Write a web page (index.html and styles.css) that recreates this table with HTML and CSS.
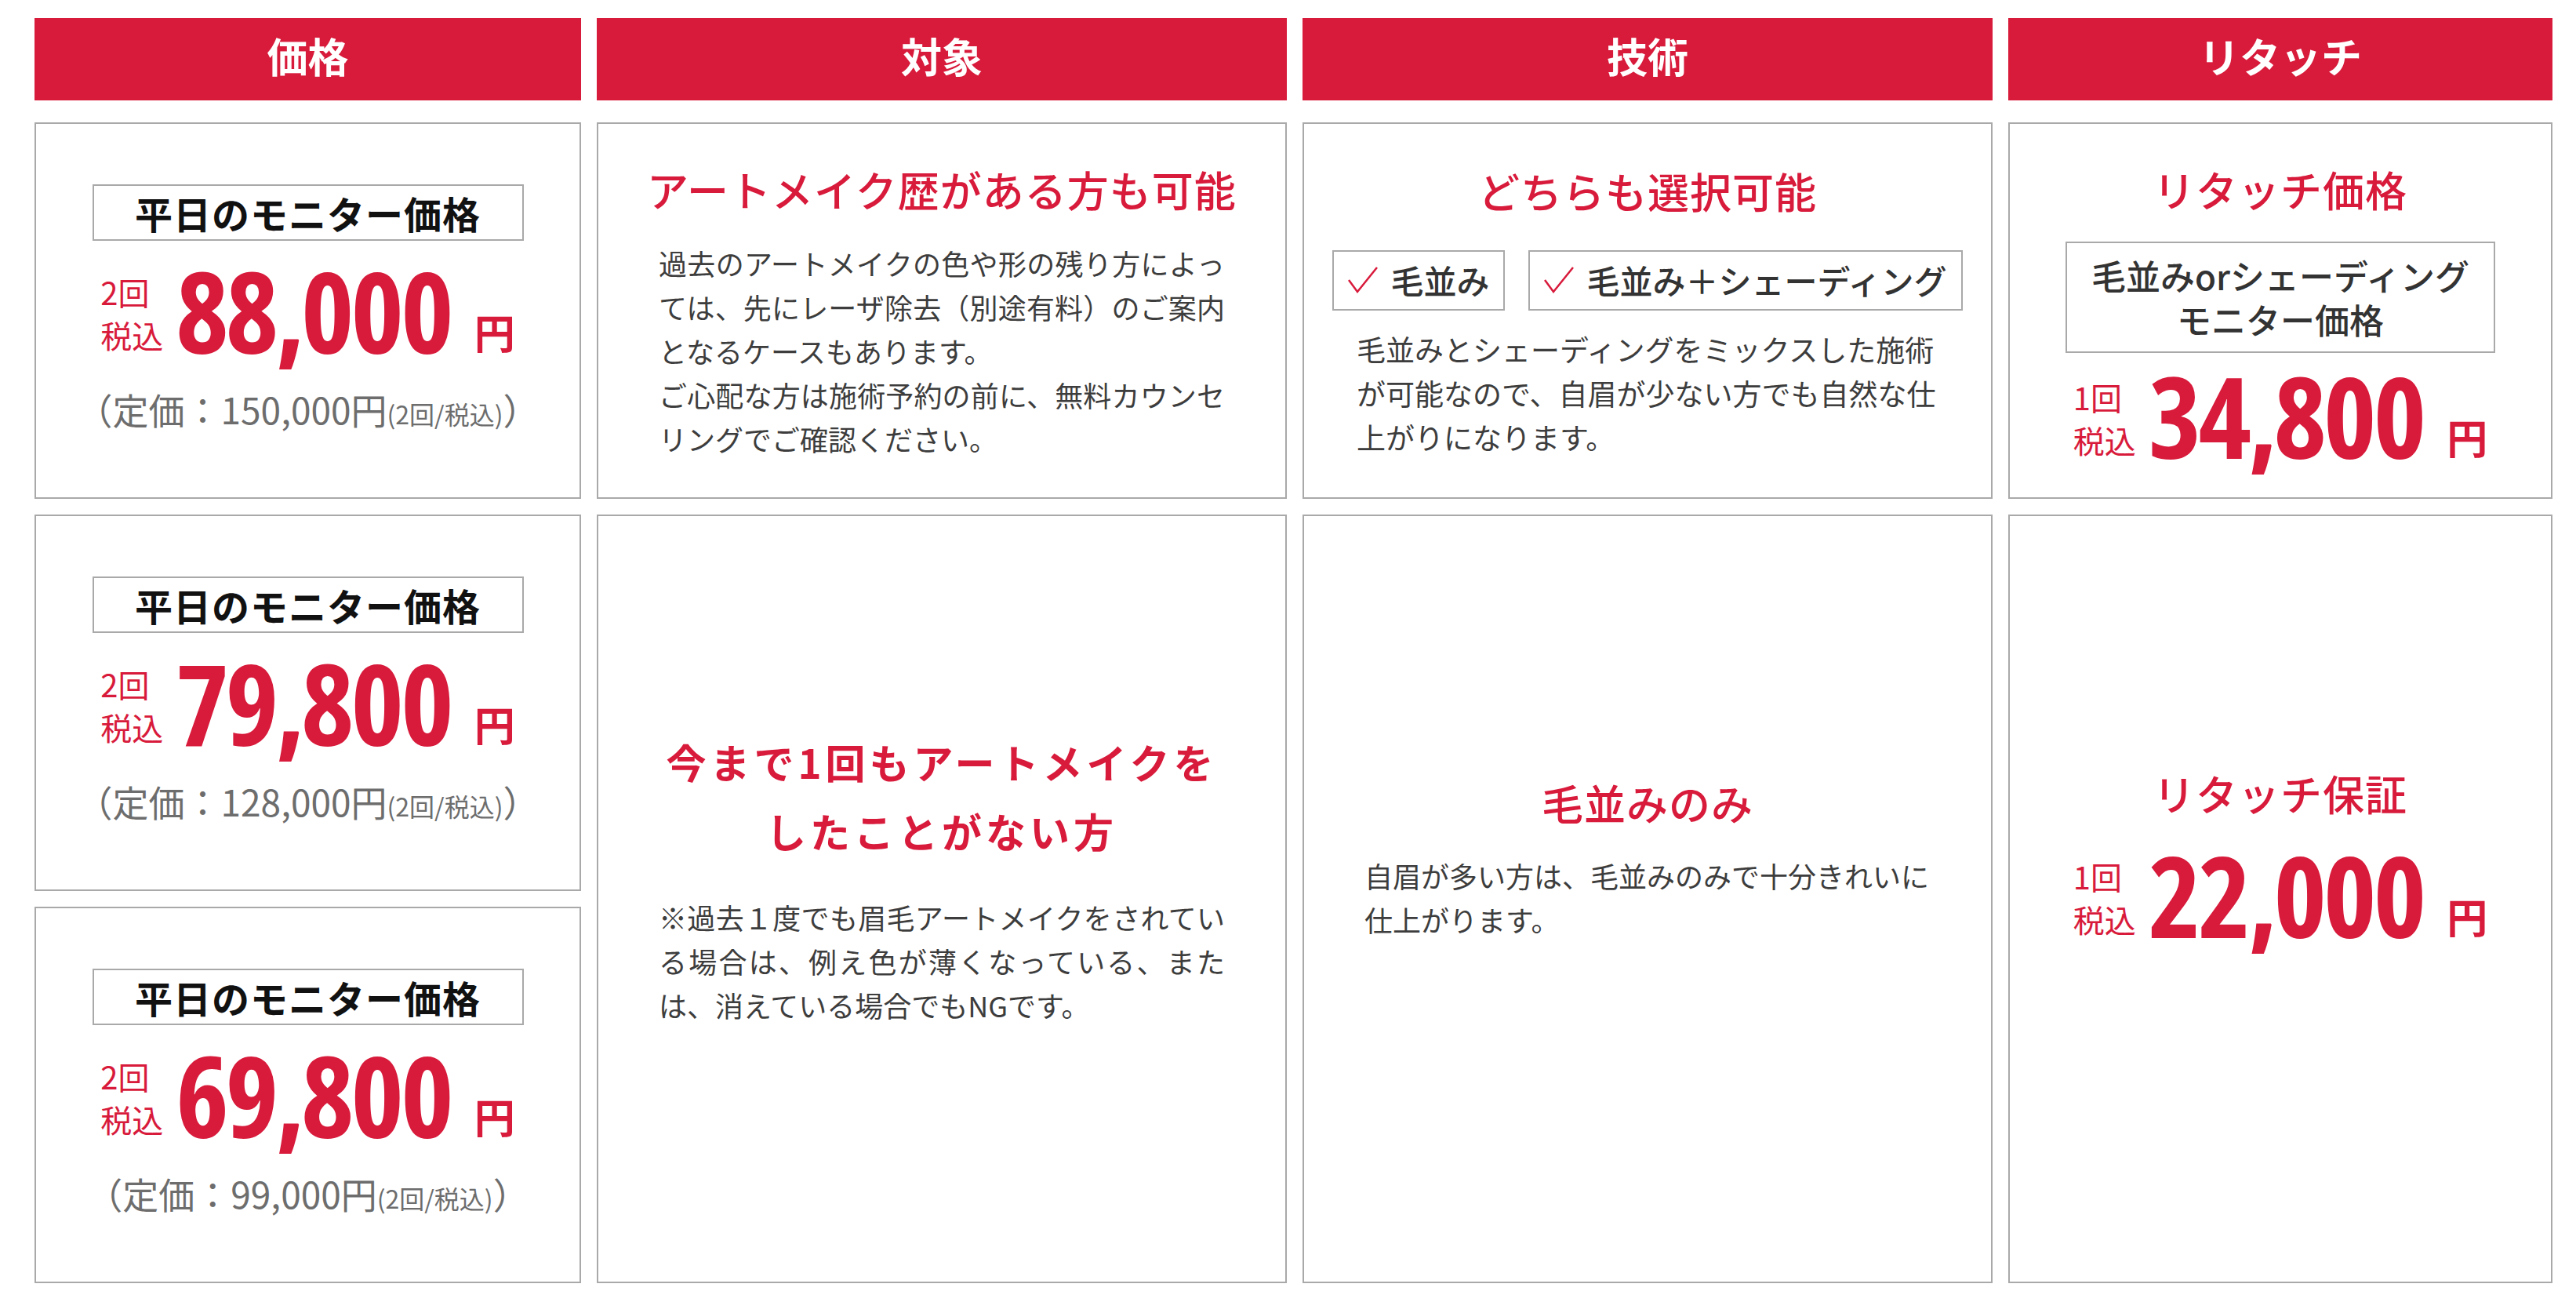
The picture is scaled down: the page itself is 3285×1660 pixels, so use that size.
FILE: index.html
```html
<!DOCTYPE html>
<html lang="ja">
<head>
<meta charset="utf-8">
<title>料金表</title>
<link rel="stylesheet" href="styles.css">
</head>
<body>
<main class="page">
  <div class="heads">
    <div class="head">価格</div>
    <div class="head">対象</div>
    <div class="head">技術</div>
    <div class="head">リタッチ</div>
  </div>
  <div class="board">
    <section class="cell cell-price">
      <div class="plan">平日のモニター価格</div>
      <div class="price">
        <div class="unit"><span>2回</span><span>税込</span></div>
        <span class="num">88,000</span>
        <span class="yen">円</span>
      </div>
      <p class="list">（定価：150,000円<small>(2回/税込)</small>）</p>
    </section>
    <section class="cell">
      <h3 class="ttl">アートメイク歴がある方も可能</h3>
      <p class="txt txt-a">過去のアートメイクの色や形の残り方によっては、先にレーザ除去（別途有料）のご案内となるケースもあります。<br>ご心配な方は施術予約の前に、無料カウンセリングでご確認ください。</p>
    </section>
    <section class="cell">
      <h3 class="ttl">どちらも選択可能</h3>
      <div class="checks">
        <div class="check"><svg class="tick" viewBox="0 0 38 34"><polyline points="1,17 12,32 37,1"/></svg><span>毛並み</span></div>
        <div class="check"><svg class="tick" viewBox="0 0 38 34"><polyline points="1,17 12,32 37,1"/></svg><span>毛並み＋シェーディング</span></div>
      </div>
      <p class="txt txt-b">毛並みとシェーディングをミックスした施術が可能なので、自眉が少ない方でも自然な仕上がりになります。</p>
    </section>
    <section class="cell cell-retouch">
      <h3 class="ttl">リタッチ価格</h3>
      <div class="plan plan-wide">毛並みorシェーディング<br>モニター価格</div>
      <div class="price price-r">
        <div class="unit"><span>1回</span><span>税込</span></div>
        <span class="num">34,800</span>
        <span class="yen">円</span>
      </div>
    </section>

    <section class="cell cell-price">
      <div class="plan">平日のモニター価格</div>
      <div class="price">
        <div class="unit"><span>2回</span><span>税込</span></div>
        <span class="num">79,800</span>
        <span class="yen">円</span>
      </div>
      <p class="list">（定価：128,000円<small>(2回/税込)</small>）</p>
    </section>
    <section class="cell tall tall-a">
      <h3 class="ttl ttl-big">今まで1回もアートメイクを<br>したことがない方</h3>
      <p class="txt txt-c">※過去１度でも眉毛アートメイクをされている場合は、例え色が薄くなっている、または、消えている場合でもNGです。</p>
    </section>
    <section class="cell tall tall-b">
      <h3 class="ttl">毛並みのみ</h3>
      <p class="txt txt-d">自眉が多い方は、毛並みのみで十分きれいに仕上がります。</p>
    </section>
    <section class="cell tall tall-b">
      <h3 class="ttl">リタッチ保証</h3>
      <div class="price price-g">
        <div class="unit"><span>1回</span><span>税込</span></div>
        <span class="num">22,000</span>
        <span class="yen">円</span>
      </div>
    </section>

    <section class="cell cell-price">
      <div class="plan">平日のモニター価格</div>
      <div class="price">
        <div class="unit"><span>2回</span><span>税込</span></div>
        <span class="num">69,800</span>
        <span class="yen">円</span>
      </div>
      <p class="list">（定価：99,000円<small>(2回/税込)</small>）</p>
    </section>
  </div>
</main>
</body>
</html>
```

FILE: styles.css
```css
* { box-sizing: border-box; }

html, body {
  margin: 0;
  padding: 0;
  background: #ffffff;
}

body {
  font-family: "Noto Sans CJK JP", "Noto Sans", sans-serif;
  color: #333333;
}

.page {
  padding: 23px 0 0 44px;
}

.heads,
.board {
  display: grid;
  grid-template-columns: 697px 880px 880px 694px;
  column-gap: 20px;
}

.heads {
  margin-bottom: 28px;
}

.head {
  height: 105px;
  background: #d81a3b;
  color: #ffffff;
  font-size: 52px;
  font-weight: 700;
  line-height: 1;
  display: flex;
  align-items: center;
  justify-content: center;
  padding-bottom: 10px;
}

.board {
  grid-template-rows: 480px 480px 480px;
  row-gap: 20px;
}

.cell {
  border: 2px solid #a9a9a9;
  display: flex;
  flex-direction: column;
  align-items: center;
  justify-content: center;
}

.cell-price {
  padding-bottom: 13px;
}

.cell-retouch {
  padding-top: 15px;
}

.tall {
  grid-row: span 2;
}

.tall-a {
  padding-bottom: 56px;
}

.tall-b {
  padding-bottom: 104px;
}

/* plan label box */
.plan {
  width: 550px;
  height: 72px;
  border: 2px solid #a9a9a9;
  display: flex;
  align-items: center;
  justify-content: center;
  font-size: 48px;
  font-weight: 700;
  color: #111111;
  letter-spacing: 1px;
  line-height: 1;
}

.plan-wide {
  width: 548px;
  height: 142px;
  font-size: 44px;
  font-weight: 500;
  line-height: 56px;
  letter-spacing: 0;
  color: #333333;
  text-align: center;
  margin-top: 32px;
}

/* price */
.price {
  display: flex;
  align-items: flex-end;
  color: #d81a3b;
  margin-top: 16px;
}

.unit {
  display: flex;
  flex-direction: column;
  font-size: 40px;
  line-height: 55px;
  font-weight: 400;
  margin-right: 16px;
  margin-bottom: 12px;
}

.num {
  font-family: "Open Sans", "Noto Sans CJK JP", sans-serif;
  font-stretch: 75%;
  font-size: 144px;
  font-weight: 700;
  line-height: 1;
  letter-spacing: -4px;
}

.yen {
  font-size: 52px;
  font-weight: 700;
  line-height: 1;
  margin-left: 30px;
  margin-bottom: 18px;
}

.price-r {
  margin-top: 7px;
}

.price-g {
  margin-top: 22px;
}

.list {
  margin: 31px 0 0;
  font-size: 46px;
  line-height: 1;
  color: #6d6d6d;
  white-space: nowrap;
}

.list small {
  font-size: 32px;
}

/* titles */
.ttl {
  margin: 0;
  font-size: 53px;
  font-weight: 500;
  line-height: 70px;
  letter-spacing: 1px;
  color: #d81a3b;
  text-align: center;
}

.ttl-big {
  font-weight: 700;
  font-size: 51px;
  line-height: 88px;
  letter-spacing: 5px;
}

/* text */
.txt {
  margin: 0;
  font-size: 36px;
  line-height: 56px;
  color: #3d3d3d;
  width: calc(20em + 2px);
  text-align: justify;
}

.txt-a {
  margin-top: 31px;
}

.txt-b {
  font-size: 37px;
  margin-top: 21px;
  text-align: left;
}

.txt-c {
  margin-top: 38px;
}

.txt-d {
  margin-top: 30px;
  text-align: left;
}

/* check boxes */
.checks {
  display: flex;
  gap: 30px;
  margin-top: 41px;
}

.check {
  height: 77px;
  border: 2px solid #a9a9a9;
  display: flex;
  align-items: center;
  padding: 0 18px;
  font-size: 42px;
  font-weight: 500;
  color: #333333;
  line-height: 1;
}

.tick {
  width: 38px;
  height: 34px;
  margin-right: 16px;
  fill: none;
  stroke: #d81a3b;
  stroke-width: 2.5;
}
```
